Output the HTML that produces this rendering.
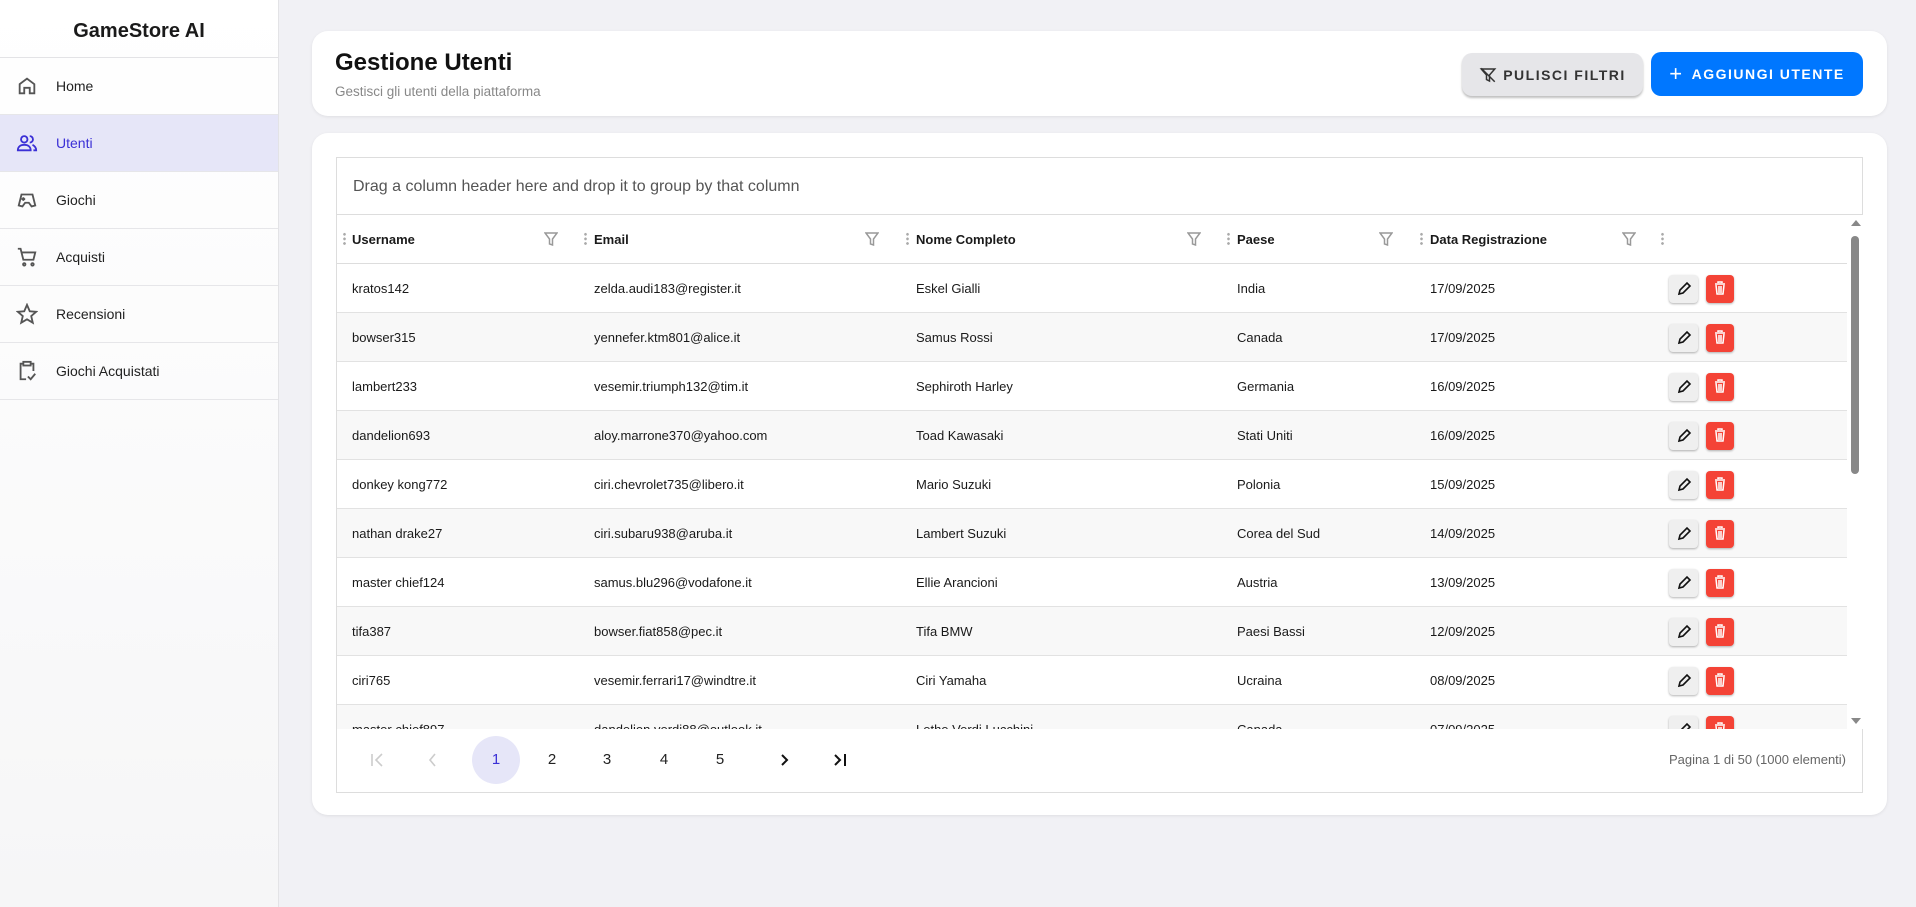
<!DOCTYPE html>
<html><head><meta charset="utf-8"><style>
*{box-sizing:border-box;margin:0;padding:0}
body{width:1916px;height:907px;background:#f1f1f5;font-family:"Liberation Sans",sans-serif;color:#1a1a1a;position:relative;overflow:hidden}
.side{position:absolute;left:0;top:0;width:279px;height:907px;background:linear-gradient(#fff,#f6f6f7);border-right:1px solid #e3e3e6}
.side h1{font-size:20px;font-weight:bold;text-align:center;height:58px;line-height:62px;border-bottom:1px solid #e3e3e6;color:#1a1a1a}
.nav{height:57px;border-bottom:1px solid #e6e6e9;display:flex;align-items:center;font-size:14px;color:#222}
.nav svg{margin-left:16px;margin-right:18px}
.nav.act{background:#e6e6f8;color:#3b30d6}
.card{position:absolute;background:#fff;border-radius:16px;box-shadow:0 1px 3px rgba(0,0,0,.08)}
.btn{position:absolute;border-radius:10px;font-size:14px;font-weight:bold;letter-spacing:1.5px;display:flex;align-items:center;justify-content:center}
.grid{position:absolute;left:336px;top:157px;width:1527px;height:636px;border:1px solid #ddd;background:#fff}
.grp{height:57px;border-bottom:1px solid #ddd;padding-left:16px;line-height:57px;font-size:16px;color:#555}
.hdr{position:absolute;top:57px;left:0;width:1510px;height:49px;border-bottom:1px solid #ddd;font-size:13px;font-weight:bold}
.hdr span{position:absolute;top:17px}
.dots{position:absolute;top:17px;width:3px;height:14px;background:radial-gradient(circle,#aaa 1.2px,transparent 1.5px) 0 0/3px 4.6px}
.row{position:absolute;left:0;width:1510px;height:49px;border-bottom:1px solid #e2e2e2;font-size:13px}
.row span{position:absolute;top:17px}
.eb{position:absolute;top:11px;width:29px;height:28px;border-radius:4px;background:#efefef;box-shadow:0 1px 2px rgba(0,0,0,.3)}
.db{position:absolute;top:11px;width:28px;height:28px;border-radius:4px;background:#f44336;box-shadow:0 1px 2px rgba(0,0,0,.3)}
.pg{position:absolute;top:578px;width:48px;height:48px;border-radius:50%;text-align:center;line-height:48px;font-size:15px;color:#222}
</style></head><body>
<div class="side">
<h1>GameStore AI</h1>
<div class="nav"><svg width="22" height="22" viewBox="0 0 24 24" fill="none" stroke="#555" stroke-width="2"><path d="M4 10l8-6 8 6v10h-5v-6H9v6H4z"/></svg>Home</div>
<div class="nav act"><svg width="22" height="22" viewBox="0 0 24 24" fill="none" stroke="#3b30d6" stroke-width="2"><circle cx="9" cy="8" r="3.5"/><path d="M2 20c0-4 3-6 7-6s7 2 7 6z"/><path d="M15 4.5a3.5 3.5 0 010 7M18 14c2 1 4 3 4 6h-3"/></svg>Utenti</div>
<div class="nav"><svg width="22" height="22" viewBox="0 0 24 24" fill="none" stroke="#555" stroke-width="2"><path d="M6 6h12l3 12-4 1-3-4h-4l-3 4-4-1z"/><path d="M8 9v4M6 11h4"/></svg>Giochi</div>
<div class="nav"><svg width="22" height="22" viewBox="0 0 24 24" fill="none" stroke="#555" stroke-width="2"><path d="M2 3h3l3 12h11l2-8H6"/><circle cx="9" cy="20" r="1.3"/><circle cx="18" cy="20" r="1.3"/></svg>Acquisti</div>
<div class="nav"><svg width="22" height="22" viewBox="0 0 24 24" fill="none" stroke="#555" stroke-width="2"><path d="M12 2l3 7 7 .6-5.4 4.7 1.7 7.2L12 17.8 5.7 21.5l1.7-7.2L2 9.6 9 9z"/></svg>Recensioni</div>
<div class="nav"><svg width="22" height="22" viewBox="0 0 24 24" fill="none" stroke="#555" stroke-width="2"><path d="M8 4H5v17h6M16 4h3v8"/><rect x="8" y="2" width="8" height="4"/><path d="M13 18l3 3 5-6"/></svg>Giochi Acquistati</div>
</div>

<div class="card" style="left:312px;top:31px;width:1575px;height:85px">
<div style="position:absolute;left:23px;top:18px;font-size:24px;font-weight:bold;color:#111">Gestione Utenti</div>
<div style="position:absolute;left:23px;top:53px;font-size:13.5px;color:#888">Gestisci gli utenti della piattaforma</div>
</div>
<div class="btn" style="left:1462px;top:53px;width:181px;height:43px;background:#e6e6e9;color:#333;box-shadow:0 2px 2px rgba(0,0,0,.25)"><svg width="18" height="18" viewBox="0 0 24 24" fill="none" stroke="#333" stroke-width="2" style="margin-right:6px"><path d="M3 4h18l-7 8v8l-4-2v-6z"/><path d="M3 3l18 18"/></svg>PULISCI FILTRI</div>
<div class="btn" style="left:1651px;top:52px;width:212px;height:44px;background:#0077ff;color:#fff"><span style="font-size:22px;margin-right:8px;font-weight:normal">+</span>AGGIUNGI UTENTE</div>

<div class="card" style="left:312px;top:133px;width:1575px;height:682px"></div>
<div class="grid">
<div class="grp">Drag a column header here and drop it to group by that column</div>
<div class="hdr">
<i class="dots" style="left:6px"></i><span style="left:15px">Username</span>
<svg style="position:absolute;left:207px;top:17px" width="14" height="14" viewBox="0 0 14 14" fill="none" stroke="#999" stroke-width="1.5"><path d="M1 1h12L8.5 7v6l-3-1V7z"/></svg>
<i class="dots" style="left:247px"></i><span style="left:257px">Email</span>
<svg style="position:absolute;left:528px;top:17px" width="14" height="14" viewBox="0 0 14 14" fill="none" stroke="#999" stroke-width="1.5"><path d="M1 1h12L8.5 7v6l-3-1V7z"/></svg>
<i class="dots" style="left:569px"></i><span style="left:579px">Nome Completo</span>
<svg style="position:absolute;left:850px;top:17px" width="14" height="14" viewBox="0 0 14 14" fill="none" stroke="#999" stroke-width="1.5"><path d="M1 1h12L8.5 7v6l-3-1V7z"/></svg>
<i class="dots" style="left:890px"></i><span style="left:900px">Paese</span>
<svg style="position:absolute;left:1042px;top:17px" width="14" height="14" viewBox="0 0 14 14" fill="none" stroke="#999" stroke-width="1.5"><path d="M1 1h12L8.5 7v6l-3-1V7z"/></svg>
<i class="dots" style="left:1083px"></i><span style="left:1093px">Data Registrazione</span>
<svg style="position:absolute;left:1285px;top:17px" width="14" height="14" viewBox="0 0 14 14" fill="none" stroke="#999" stroke-width="1.5"><path d="M1 1h12L8.5 7v6l-3-1V7z"/></svg>
<i class="dots" style="left:1324px"></i>
</div>
<div style="position:absolute;left:0;top:106px;width:1510px;height:465px;overflow:hidden">
<div id="rows"></div>
</div>
<div style="position:absolute;left:1511px;top:57px;width:15px;height:514px;background:#fff">
<div style="position:absolute;left:3px;top:5px;border:5px solid transparent;border-bottom:6px solid #888;border-top:0"></div>
<div style="position:absolute;left:3px;top:21px;width:8px;height:238px;border-radius:4px;background:#888"></div>
<div style="position:absolute;left:3px;top:503px;border:5px solid transparent;border-top:6px solid #888;border-bottom:0"></div>
</div>
<svg style="position:absolute;left:32px;top:594px" width="16" height="16" viewBox="0 0 16 16" fill="none" stroke="#ccc" stroke-width="1.6"><path d="M3 2v12M13 2L7 8l6 6"/></svg>
<svg style="position:absolute;left:88px;top:594px" width="16" height="16" viewBox="0 0 16 16" fill="none" stroke="#ccc" stroke-width="1.6"><path d="M10 2L5 8l5 6"/></svg>
<div class="pg" style="left:135px;background:#e6e6f8;color:#3b30d6">1</div>
<div class="pg" style="left:191px">2</div>
<div class="pg" style="left:246px">3</div>
<div class="pg" style="left:303px">4</div>
<div class="pg" style="left:359px">5</div>
<svg style="position:absolute;left:439px;top:594px" width="16" height="16" viewBox="0 0 16 16" fill="none" stroke="#111" stroke-width="2"><path d="M6 3l5 5-5 5"/></svg>
<svg style="position:absolute;left:495px;top:594px" width="16" height="16" viewBox="0 0 16 16" fill="none" stroke="#111" stroke-width="2"><path d="M3 3l5 5-5 5M13 2v12"/></svg>
<div style="position:absolute;right:16px;top:594px;font-size:13px;color:#666">Pagina 1 di 50 (1000 elementi)</div>
</div>
<script>
var d=[["kratos142","zelda.audi183@register.it","Eskel Gialli","India","17/09/2025"],["bowser315","yennefer.ktm801@alice.it","Samus Rossi","Canada","17/09/2025"],["lambert233","vesemir.triumph132@tim.it","Sephiroth Harley","Germania","16/09/2025"],["dandelion693","aloy.marrone370@yahoo.com","Toad Kawasaki","Stati Uniti","16/09/2025"],["donkey kong772","ciri.chevrolet735@libero.it","Mario Suzuki","Polonia","15/09/2025"],["nathan drake27","ciri.subaru938@aruba.it","Lambert Suzuki","Corea del Sud","14/09/2025"],["master chief124","samus.blu296@vodafone.it","Ellie Arancioni","Austria","13/09/2025"],["tifa387","bowser.fiat858@pec.it","Tifa BMW","Paesi Bassi","12/09/2025"],["ciri765","vesemir.ferrari17@windtre.it","Ciri Yamaha","Ucraina","08/09/2025"],["master chief897","dandelion.verdi88@outlook.it","Lethe Verdi Lucchini","Canada","07/09/2025"]];
var x=[15,257,579,900,1093],h="";
d.forEach(function(r,i){h+='<div class="row" style="top:'+(i*49)+'px;background:'+(i%2?'#f8f8f8':'#fff')+'">';r.forEach(function(c,j){h+='<span style="left:'+x[j]+'px">'+c+'</span>'});
h+='<div class="eb" style="left:1332px"><svg width="29" height="28" viewBox="0 0 29 28"><path d="M10 19l1-4 7-7 3 3-7 7z" fill="none" stroke="#111" stroke-width="1.6"/></svg></div><div class="db" style="left:1369px"><svg width="28" height="28" viewBox="0 0 28 28" fill="none" stroke="#fff" stroke-width="1.5"><path d="M9 9h10M12 8v-1h4v1M10 10l1 9h6l1-9M13 11v7M15 11v7"/></svg></div></div>'});
document.getElementById('rows').innerHTML=h;
</script>
</body></html>
